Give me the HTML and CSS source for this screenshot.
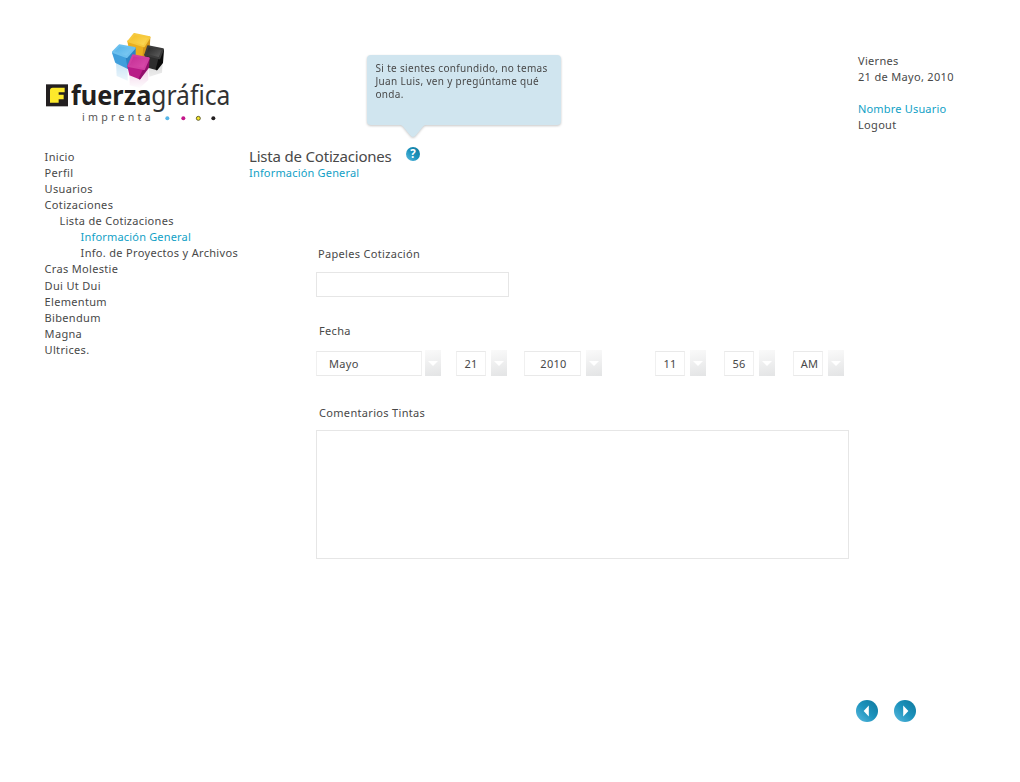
FILE: index.html
```html
<!DOCTYPE html>
<html lang="es">
<head>
<meta charset="utf-8">
<title>Lista de Cotizaciones</title>
<link rel="stylesheet" href="styles.css">
</head>
<body>
<div class="page">
  <aside class="sidebar">
    <svg class="logo" viewBox="0 0 612 318" role="img" aria-label="fuerzagráfica imprenta">
      <defs>
        <linearGradient id="yt" x1="0" y1="0" x2="1" y2="1"><stop offset="0" stop-color="#f3bd22"/><stop offset="1" stop-color="#fddc60"/></linearGradient>
        <linearGradient id="bt" x1="0" y1="0" x2="1" y2="1"><stop offset="0" stop-color="#4fb0e8"/><stop offset="1" stop-color="#86cff5"/></linearGradient>
        <linearGradient id="kt" x1="0" y1="0" x2="1" y2="1"><stop offset="0" stop-color="#222"/><stop offset="1" stop-color="#666"/></linearGradient>
        <linearGradient id="mt" x1="0" y1="0" x2="1" y2="1"><stop offset="0" stop-color="#c22b93"/><stop offset="1" stop-color="#dc50ae"/></linearGradient>
        <linearGradient id="fade" x1="0" y1="0" x2="0" y2="1"><stop offset="0" stop-color="#fff" stop-opacity="0"/><stop offset="1" stop-color="#fff"/></linearGradient>
      </defs>
      <g opacity=".35">
        <path fill="#6bb8e8" d="M240 116l35 18v36l-33-14z"/>
        <path fill="#d060b0" d="M281 154l30 10 26-32v36l-26 24-30-8z"/>
        <path fill="#999" d="M338 134l24 2 18-22-2 32-38 12z"/>
      </g>
      <path fill="url(#fade)" d="M230 120h156v76H230z"/>
      <g stroke-width="6" stroke-linejoin="round">
        <path fill="#eaae1e" stroke="#eaae1e" d="M277 52l49 15-4 34-38-14z"/>
        <path fill="#d3961a" stroke="#d3961a" d="M325 67l15-26-2 32-16 28z"/>
        <path fill="url(#yt)" stroke="#f6c93e" d="M277 52l18-22 46 10-17 27z"/>
        <path fill="#409fdc" stroke="#409fdc" d="M231 86l44 16 3 31-38-19z"/>
        <path fill="#2c84c4" stroke="#2c84c4" d="M272 100l24-27v35l-18 25z"/>
        <path fill="url(#bt)" stroke="#6cc0ee" d="M231 84l19-20 46 8-24 27z"/>
        <path fill="#2d2d2d" stroke="#2d2d2d" d="M328 92l42 14-8 29-24-6z"/>
        <path fill="#0c0c0c" stroke="#0c0c0c" d="M370 106l11-27-3 37-16 20z"/>
        <path fill="url(#kt)" stroke="#3c3c3c" d="M328 92l8-25 45 9-11 27z"/>
        <path fill="#b81b87" stroke="#b81b87" d="M277 127l47 10-13 26-28-11z"/>
        <path fill="#930f6c" stroke="#930f6c" d="M324 137l14-34-2 27-25 33z"/>
        <path fill="url(#mt)" stroke="#cf40a1" d="M277 126l14-32 47 9-14 32z"/>
      </g>
      <rect x="30" y="181" width="66" height="66" fill="#231f20"/>
      <path fill="#fde92b" d="M50 191h36v14H68v7h15v14H68v10H42v-37q0-8 8-8z"/>
      <text class="logo-bold" x="105" y="243" textLength="241" lengthAdjust="spacingAndGlyphs">fuerza</text>
      <text class="logo-regular" x="346" y="243" textLength="237" lengthAdjust="spacingAndGlyphs">gráfica</text>
      <text class="logo-sub" x="138" y="292" textLength="206">imprenta</text>
      <circle cx="394" cy="283" r="6" fill="#57b6e8"/>
      <circle cx="442" cy="283" r="6" fill="#c4168a"/>
      <circle cx="487" cy="283" r="6" fill="#f4e62c" stroke="#4b481c" stroke-width="2.500"/>
      <circle cx="532" cy="283" r="6" fill="#231f20"/>
    </svg>
    <nav>
      <ul class="menu">
        <li>Inicio</li>
        <li>Perfil</li>
        <li>Usuarios</li>
        <li>Cotizaciones</li>
        <li class="level-2">Lista de Cotizaciones</li>
        <li class="level-3 active">Información General</li>
        <li class="level-3">Info. de Proyectos y Archivos</li>
        <li>Cras Molestie</li>
        <li>Dui Ut Dui</li>
        <li>Elementum</li>
        <li>Bibendum</li>
        <li>Magna</li>
        <li>Ultrices.</li>
      </ul>
    </nav>
  </aside>

  <main class="content">
    <div class="bubble">Si te sientes confundido, no temas<br>Juan Luis, ven y pregúntame qué<br>onda.
      <svg class="bubble-tail" viewBox="0 0 34 14"><path fill="#d0e5ef" d="M0 0h34c-5 0-7 2-9 5l-5 6q-3 4-6 0L9 5C7 2 5 0 0 0z"/></svg>
    </div>
    <div class="heading">
      <h1>Lista de Cotizaciones</h1>
      <svg class="help" viewBox="0 0 14 14">
        <defs><linearGradient id="disc" x1="1" y1="0" x2="0" y2="1"><stop offset="0" stop-color="#0e779c"/><stop offset=".5" stop-color="#1d93bd"/><stop offset="1" stop-color="#5cbbe0"/></linearGradient></defs>
        <circle cx="7" cy="7" r="7" fill="url(#disc)"/>
        <text class="help-mark" x="7" y="11" text-anchor="middle">?</text>
      </svg>
    </div>
    <h2>Información General</h2>

    <form class="form">
      <label class="label first">Papeles Cotización</label>
      <div class="box paper"></div>
      <label class="label">Fecha</label>
      <div class="date-row">
        <div class="select month"><span class="box">Mayo</span><span class="arrow"></span></div>
        <div class="select day"><span class="box">21</span><span class="arrow"></span></div>
        <div class="select year"><span class="box">2010</span><span class="arrow"></span></div>
        <div class="select hour"><span class="box">11</span><span class="arrow"></span></div>
        <div class="select minute"><span class="box">56</span><span class="arrow"></span></div>
        <div class="select ampm"><span class="box">AM</span><span class="arrow"></span></div>
      </div>
      <label class="label">Comentarios Tintas</label>
      <div class="box comments"></div>
    </form>
  </main>

  <aside class="account">
    <div>Viernes</div>
    <div>21 de Mayo, 2010</div>
    <div class="user">Nombre Usuario</div>
    <div>Logout</div>
    <div class="pager">
      <svg viewBox="0 0 22 22"><circle cx="11" cy="11" r="11" fill="url(#disc)"/><path fill="#fff" d="M12.800 5.500v11L7.600 11z"/></svg>
      <svg viewBox="0 0 22 22"><circle cx="11" cy="11" r="11" fill="url(#disc)"/><path fill="#fff" d="M9.200 5.500v11l5.200-5.500z"/></svg>
    </div>
  </aside>
</div>
</body>
</html>
```
FILE: styles.css
```css
* { box-sizing: border-box; }

body {
  margin: 0;
  background: #fff;
  color: #484848;
  font: 11px/16px "Noto Sans", "Open Sans", sans-serif;
  letter-spacing: 0.32px;
}

.page {
  display: grid;
  grid-template-columns: 249px 609px 1fr;
  height: 782px;
  overflow: hidden;
}

/* Sidebar */
.sidebar { padding: 24px 0 0 36px; }
.logo { display: block; width: 204px; height: 106px; }
.logo text { font-family: "Noto Sans", sans-serif; fill: #231f20; letter-spacing: 0; }
.logo .logo-bold { font-size: 82px; font-weight: 700; }
.logo .logo-regular { font-size: 82px; fill: #333; }
.logo .logo-sub { font-size: 32px; fill: #555; }

.menu {
  margin: 19px 0 0;
  padding: 0 0 0 8.6px;
  list-style: none;
  line-height: 16.06px;
  white-space: nowrap;
}
.level-2 { padding-left: 15px; }
.level-3 { padding-left: 36px; }
.active, .user, h2 { color: #119fc6; letter-spacing: 0.18px; }

/* Main column */
.content { padding-top: 55px; }
.bubble {
  position: relative;
  width: 194px;
  height: 70px;
  margin-left: 118px;
  padding: 7px 0 0 8.5px;
  border-radius: 4px;
  background: #d0e5ef;
  filter: drop-shadow(0 1px 1px rgba(0, 0, 0, 0.22));
  font-size: 10px;
  line-height: 13px;
  white-space: nowrap;
}
.bubble-tail {
  position: absolute;
  left: 29px;
  top: 69px;
  width: 34px;
  height: 14px;
}
.heading {
  display: flex;
  gap: 13px;
  height: 22px;
  margin-top: 20px;
}
h1 {
  width: 144px;
  margin: 0;
  font-size: 15px;
  font-weight: 400;
  line-height: 22px;
  letter-spacing: -0.19px;
  white-space: nowrap;
}
.help { width: 14px; height: 14px; margin-top: 2px; }
.help-mark { font: 700 11.5px "Noto Sans", sans-serif; fill: #fff; letter-spacing: 0; }
h2 { margin: -2px 0 0; font-size: 11px; font-weight: 400; line-height: 16px; }

/* Form */
.form { margin: 65px 0 0 67px; }
.label { display: block; padding-left: 3px; }
.label.first { padding-left: 2px; }
.box { display: block; border: 1px solid #e6e6e6; background: #fff; }
.paper { width: 193px; height: 25px; margin: 10px 0 26px; }
.date-row { display: flex; margin: 11px 0 29px; }
.select { display: flex; justify-content: space-between; height: 26px; }
.select .box {
  height: 25px;
  margin-top: 1px;
  border-color: #e9e9e9 #f0f0f0;
  line-height: 24px;
  text-align: center;
}
.month { width: 125px; }
.month .box { width: 106px; padding-left: 12px; text-align: left; }
.day { width: 51px; margin-left: 15px; }
.day .box { width: 30px; }
.year { width: 78px; margin-left: 17px; }
.year .box { width: 57px; padding-left: 2px; }
.hour { width: 51px; margin-left: 53px; }
.minute { width: 51px; margin-left: 18px; }
.ampm { width: 51px; margin-left: 18px; }
.hour .box, .minute .box, .ampm .box { width: 30px; }
.ampm .box { padding-left: 3px; }
.arrow {
  display: flex;
  align-items: center;
  justify-content: center;
  width: 16px;
  height: 26px;
  background: linear-gradient(170deg, #fafafa, #e3e4e5);
}
.arrow::before {
  content: "";
  border: 5px solid transparent;
  border-top-color: #fff;
  border-bottom: 0;
}
.comments { width: 533px; height: 129px; margin-top: 9px; }

/* Account and pager */
.account { display: flex; flex-direction: column; padding-top: 53px; white-space: nowrap; }
.user { margin-top: 16px; }
.pager { display: flex; gap: 16px; margin: 567px 0 0 -2px; }
.pager svg { width: 22px; height: 22px; }
```
